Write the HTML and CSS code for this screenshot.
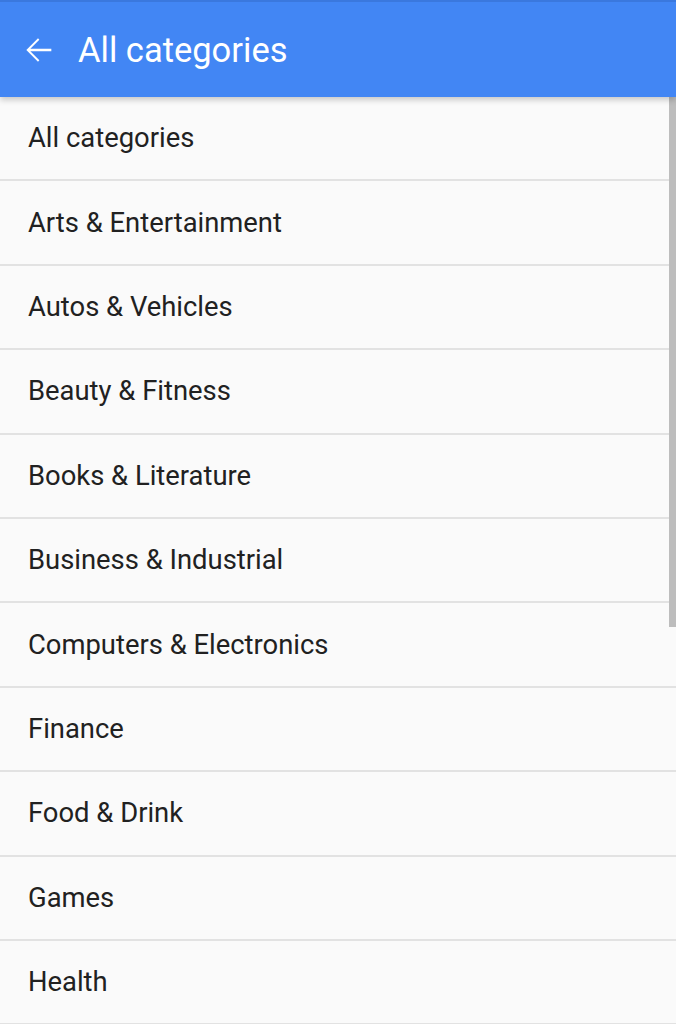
FILE: index.html
```html
<!DOCTYPE html>
<html lang="en">
<head>
    <meta charset="UTF-8">
    <title>All categories</title>
    <link rel="stylesheet" href="styles.css">
</head>
<body>
    <div class="app-bar">
        <svg class="back" viewBox="0 0 24 24" width="40" height="40">
            <path d="M20 11.2H7.4l5.4-5.4L12 5l-7 7 7 7 .8-.8-5.4-5.4H20v-1.6z" fill="#fff"/>
        </svg>
        <h1 class="title">All categories</h1>
    </div>
    <ul class="category-list">
        <li>All categories</li>
        <li>Arts &amp; Entertainment</li>
        <li>Autos &amp; Vehicles</li>
        <li>Beauty &amp; Fitness</li>
        <li>Books &amp; Literature</li>
        <li>Business &amp; Industrial</li>
        <li>Computers &amp; Electronics</li>
        <li>Finance</li>
        <li>Food &amp; Drink</li>
        <li>Games</li>
        <li>Health</li>
    </ul>
    <div class="scrollbar"></div>
</body>
</html>
```

FILE: styles.css
```css
body { margin: 0; background: #fafafa; font-family: Roboto, "Noto Sans", sans-serif; overflow: hidden; }
.app-bar { position: relative; z-index: 2; display: flex; align-items: center; gap: 20px; height: 95px; padding-left: 18px; background: #4286f4; border-top: 2px solid #3a78de; box-shadow: 0 3px 6px rgba(0,0,0,0.2); }
.back { flex: none; }
.title { margin: 0; color: #fff; font-size: 34.5px; font-weight: 400; }
.category-list { list-style: none; margin: 0; padding: 0; }
.category-list li { box-sizing: border-box; height: 84.4px; padding-left: 28px; display: flex; align-items: center; font-size: 27.4px; color: #212121; border-bottom: 2px solid #e2e2e2; }
.scrollbar { position: absolute; top: 97px; right: 0; width: 7px; height: 530px; background: #bdbdbd; }
```
